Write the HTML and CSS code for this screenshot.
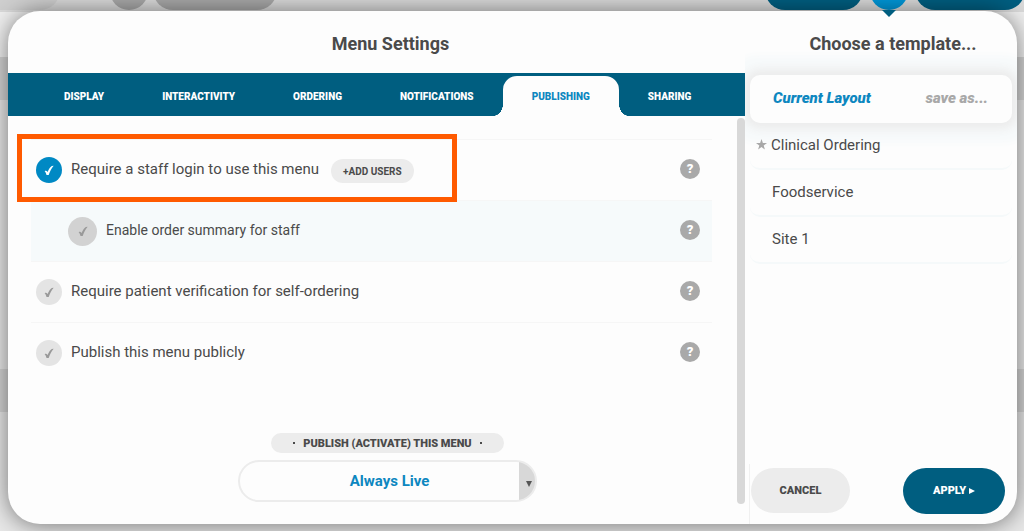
FILE: index.html
```
<!DOCTYPE html>
<html lang="en">
  <head>
    <meta charset="utf-8">
    <title>Menu Settings</title>
    <link rel="stylesheet" href="styles.css">
  </head>
  <body>
    <svg width="0" height="0" class="sprite">
      <symbol id="check" viewBox="0 0 12 12">
        <path d="M0.8 6.8 C2 6 3.2 6.2 4.3 7.8 C5.8 4.4 7.4 2 9.4 0.6 L11.6 0.3 C9 3.6 7 7.2 5.6 11.5 L3 11.5 C2.6 9.6 2 8 0.8 6.8 Z" fill="currentColor"/>
      </symbol>
    </svg>

    <div class="toolbar">
      <span class="tool corner"></span>
      <span class="tool round"></span>
      <span class="tool wide"></span>
      <span class="tool blue first"></span>
      <span class="tool active"></span>
      <span class="tool blue last"></span>
    </div>

    <div class="modal">
      <main class="settings">
        <h2 class="title">Menu Settings</h2>
        <nav class="tabs">
          <a href="#display">DISPLAY</a>
          <a href="#interactivity">INTERACTIVITY</a>
          <a href="#ordering">ORDERING</a>
          <a href="#notifications">NOTIFICATIONS</a>
          <a href="#publishing" class="current">PUBLISHING</a>
          <a href="#sharing">SHARING</a>
        </nav>

        <div class="panel">
          <div class="panel-content">
            <div class="option">
              <label>
                <span class="tick"><input type="checkbox" checked><svg><use href="#check"/></svg></span>
                Require a staff login to use this menu
              </label>
              <button class="add-users">+ADD USERS</button>
              <button class="help">?</button>
              <span class="highlight"></span>
            </div>
            <div class="option sub">
              <label>
                <span class="tick"><input type="checkbox"><svg><use href="#check"/></svg></span>
                Enable order summary for staff
              </label>
              <button class="help">?</button>
            </div>
            <div class="option">
              <label>
                <span class="tick"><input type="checkbox"><svg><use href="#check"/></svg></span>
                Require patient verification for self-ordering
              </label>
              <button class="help">?</button>
            </div>
            <div class="option">
              <label>
                <span class="tick"><input type="checkbox"><svg><use href="#check"/></svg></span>
                Publish this menu publicly
              </label>
              <button class="help">?</button>
            </div>

            <div class="publish">
              <label for="publishMode"><i></i>PUBLISH (ACTIVATE) THIS MENU<i></i></label>
              <div class="select-wrap">
                <select id="publishMode">
                  <option>Always Live</option>
                </select>
                <svg viewBox="0 0 6 6"><path d="M0 0 H6 L3 6 Z" fill="#555"/></svg>
              </div>
            </div>
          </div>
          <div class="scrollbar"></div>
        </div>
      </main>

      <aside class="templates">
        <span class="pointer"></span>
        <h2 class="title">Choose a template...</h2>
        <div class="layout-card">
          <span class="layout-name">Current Layout</span>
          <a href="#save" class="save-as">save as...</a>
        </div>
        <ul class="template-list">
          <li><svg class="star" viewBox="0 0 12 12"><path d="M6 0 L7.5 4.3 H12 L8.4 7 L9.7 11.5 L6 8.8 L2.3 11.5 L3.6 7 L0 4.3 H4.5 Z" fill="#a8a8a8"/></svg><a href="#clinical">Clinical Ordering</a></li>
          <li><a href="#foodservice">Foodservice</a></li>
          <li><a href="#site1">Site 1</a></li>
        </ul>
        <div class="actions">
          <button class="cancel">CANCEL</button>
          <button class="apply">APPLY <svg viewBox="0 0 6 6"><path d="M0 0 L6 3 L0 6 Z" fill="#fff"/></svg></button>
        </div>
      </aside>
    </div>
  </body>
</html>
```

FILE: styles.css
```
* {
  box-sizing: border-box;
}

body {
  margin: 0;
  min-height: 100vh;
  display: flex;
  flex-direction: column;
  font-family: Roboto, sans-serif;
  font-size: 15px;
  color: #4a4a4a;
  background: linear-gradient(#dadada 0 12px, #f0f0f0 12px 57px, #d4d4d4 57px 100px, #e8e8e8 100px 369px, #d4d4d4 369px 412px, #e8e8e8 412px);
}

button, select {
  font-family: inherit;
  border: none;
  cursor: pointer;
}

a {
  color: inherit;
  text-decoration: none;
}

.sprite {
  position: absolute;
}

/* page toolbar behind the dialog */
.toolbar {
  display: flex;
  align-items: flex-end;
  height: 10px;
  margin-bottom: 1px;
  overflow: hidden;
}

.tool {
  flex: none;
  height: 40px;
  border-radius: 20px;
  background: #a8a8a8;
}

.tool.corner {
  width: 60px;
  margin-right: 50px;
  border-radius: 0 0 20px 0;
  background: #cfcfcf;
}

.tool.round {
  width: 38px;
  margin-right: 5px;
}

.tool.wide {
  width: 124px;
}

.tool.blue {
  width: 98px;
  background: #005e80;
}

.tool.first {
  margin-left: auto;
}

.tool.active {
  width: 38px;
  margin: 0 7px;
  background: #0097d8;
}

.tool.last {
  width: 110px;
  margin-right: -1px;
}

.modal {
  flex: 1;
  display: grid;
  grid-template-columns: 1fr 272px;
  margin: 0 7px 7px 8px;
  border-radius: 32px;
  background: #fdfdfd;
  box-shadow: 0 1px 24px rgba(0, 0, 0, 0.5);
}

.settings {
  display: flex;
  flex-direction: column;
}

.title {
  margin: 0;
  padding: 0 0 0 28px;
  font-size: 18px;
  line-height: 66px;
  height: 62px;
  text-align: center;
}

.tabs {
  display: flex;
  height: 43px;
  padding-left: 27px;
  background: #005e80;
  color: #fff;
  font-size: 10px;
  font-weight: 900;
  line-height: 47px;
}

.tabs a {
  padding: 0 29px;
}

.tabs .current {
  position: relative;
  margin-top: 3px;
  border-radius: 14px 14px 0 0;
  background: #fdfdfd;
  color: #0d87c0;
  line-height: 41px;
}

/* curved feet of the open tab */
.tabs .current::before,
.tabs .current::after {
  content: "";
  position: absolute;
  bottom: 0;
  width: 10px;
  height: 12px;
}

.tabs .current::before {
  right: 100%;
  background: radial-gradient(ellipse 10px 12px at 0 0, #005e80 98%, #fdfdfd);
}

.tabs .current::after {
  left: 100%;
  background: radial-gradient(ellipse 10px 12px at 100% 0, #005e80 98%, #fdfdfd);
}

.panel {
  flex: 1;
  display: flex;
}

.panel-content {
  flex: 1;
  display: flex;
  flex-direction: column;
  padding: 23px 25px 22px 23px;
}

.scrollbar {
  width: 8px;
  margin: 2px 0 20px;
  border-radius: 5px;
  background: #d8d8d8;
}

.option {
  position: relative;
  display: flex;
  align-items: center;
  height: 61px;
  padding: 0 12px 2px 5px;
  border-top: 1px solid #f6f6f6;
}

.option label {
  display: flex;
  align-items: center;
  gap: 9px;
}

.option.sub {
  padding-left: 37px;
  background: #f6fafb;
  font-size: 14px;
}

.tick {
  display: grid;
  place-items: center;
  width: 26px;
  height: 26px;
  margin-top: 2px;
}

.tick input {
  grid-area: 1 / 1;
  appearance: none;
  width: 100%;
  height: 100%;
  margin: 0;
  border-radius: 50%;
  background: #e4e4e4;
}

.tick svg {
  grid-area: 1 / 1;
  width: 10px;
  height: 11px;
  color: #999;
  pointer-events: none;
}

.tick input:checked {
  background: #0089c4;
}

.tick input:checked + svg {
  color: #fff;
}

.sub .tick {
  width: 29px;
  height: 29px;
}

.sub .tick input {
  background: #d2d2d2;
}

.add-users {
  height: 24px;
  margin: 4px 0 0 12px;
  padding: 0 12px;
  border-radius: 12px;
  background: #ececec;
  color: #4a4a4a;
  font-size: 10px;
  font-weight: 700;
}

.help {
  width: 20px;
  height: 20px;
  margin-left: auto;
  padding: 0;
  border-radius: 50%;
  background: #a9a9a9;
  color: #fff;
  font-size: 13px;
  font-weight: 900;
  line-height: 20px;
}

.highlight {
  position: absolute;
  left: -14px;
  top: -6px;
  width: 440px;
  height: 68px;
  border: 5px solid #ff5a00;
  z-index: 1;
  pointer-events: none;
}

.publish {
  display: flex;
  flex-direction: column;
  align-items: center;
  gap: 7px;
  margin-top: auto;
  padding-left: 32px;
}

.publish label {
  display: flex;
  align-items: center;
  gap: 8px;
  height: 20px;
  padding: 0 22px;
  border-radius: 10px;
  background: #ececec;
  font-size: 11px;
  font-weight: 900;
}

.publish i {
  width: 2px;
  height: 2px;
  background: #4a4a4a;
}

.select-wrap {
  display: grid;
  align-items: center;
  width: 299px;
}

.select-wrap select {
  grid-area: 1 / 1;
  appearance: none;
  height: 42px;
  padding: 0 14px 0 18px;
  border: 2px solid #ececec;
  border-radius: 21px;
  background: linear-gradient(#d8d8d8, #d8d8d8) right / 16px 100% no-repeat #fdfdfd;
  color: #0d87c0;
  font-size: 15px;
  font-weight: 700;
  text-align: center;
  text-align-last: center;
}

.select-wrap svg {
  grid-area: 1 / 1;
  justify-self: end;
  width: 6px;
  height: 6px;
  margin: 5px 5px 0 0;
  pointer-events: none;
}

.templates {
  position: relative;
  display: flex;
  flex-direction: column;
  overflow-x: clip;
}

.templates .title {
  position: relative;
  z-index: 1;
  padding-left: 24px;
}

/* arrow under the active toolbar button */
.pointer {
  position: absolute;
  left: 137px;
  top: -1px;
  border: 7px solid transparent;
  border-top-color: #005e80;
  border-bottom: 0;
}

.layout-card {
  display: flex;
  justify-content: space-between;
  align-items: center;
  height: 48px;
  margin: 2px 5px 0;
  padding: 0 24px 3px 23px;
  border-radius: 10px;
  background: #fdfdfd;
  box-shadow: 0 0 10px 6px #ececec, 0 0 6px 20px #f7fafb;
  font-weight: 900;
  font-style: italic;
}

.layout-name {
  color: #0d87c0;
}

.save-as {
  color: #a8a8a8;
}

.template-list {
  position: relative;
  list-style: none;
  margin: 0 5px;
  padding: 0;
}

.template-list li {
  display: flex;
  align-items: center;
  height: 47px;
  padding: 0 0 2px 22px;
  border-bottom: 2px solid #f5f9fa;
  border-radius: 10px;
}

.template-list li:has(.star) {
  padding-left: 6px;
}

.star {
  width: 11px;
  height: 11px;
  margin-right: 4px;
}

.actions {
  display: flex;
  justify-content: space-between;
  align-items: center;
  height: 60px;
  margin: auto 0 0 4px;
  padding: 0 12px 7px 1px;
  border-left: 1px solid #f0f0f0;
}

.actions button {
  font-size: 11px;
  font-weight: 900;
}

.cancel {
  width: 99px;
  height: 45px;
  border-radius: 23px;
  background: #ececec;
  color: #4a4a4a;
}

.actions .apply {
  width: 102px;
  height: 46px;
  border-radius: 23px;
  background: #005e80;
  color: #fff;
}

.apply svg {
  width: 6px;
  height: 6px;
}
```
